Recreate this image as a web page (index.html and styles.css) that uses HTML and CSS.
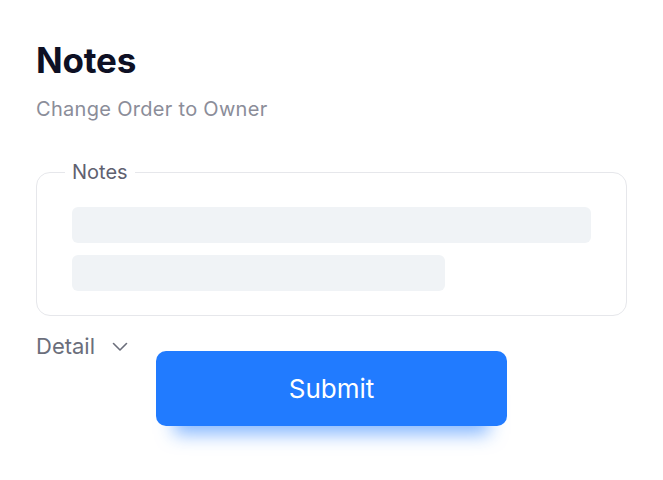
FILE: index.html
```html
<!DOCTYPE html>
<html>
<head>
<meta charset="utf-8">
<link rel="stylesheet" href="styles.css">
</head>
<body>
<div class="page">
  <h1 class="title">Notes</h1>
  <p class="subtitle">Change Order to Owner</p>
  <fieldset class="card">
    <legend class="legend">Notes</legend>
    <div class="bar bar-long"></div>
    <div class="bar bar-short"></div>
  </fieldset>
  <div class="detail">
    <span>Detail</span>
    <svg class="chev" width="16" height="10" viewBox="0 0 16 10"><path d="M1.5 1.5 L8 8 L14.5 1.5" fill="none" stroke="#6b6e7b" stroke-width="1.6" stroke-linecap="round" stroke-linejoin="round"/></svg>
  </div>
  <div class="actions">
    <button class="submit">Submit</button>
  </div>
</div>
</body>
</html>
```
FILE: styles.css
```css
* { box-sizing: border-box; }
html, body { margin: 0; background: #fff; }
body { font-family: Inter, "Noto Sans", sans-serif; }
.page { padding: 38px 36px 0 36px; }
.title {
  margin: 0;
  font-size: 35px;
  line-height: 44px;
  font-weight: 700;
  color: #0e1024;
  letter-spacing: -0.2px;
}
.subtitle {
  margin: 15px 0 0 0;
  font-size: 20px;
  line-height: 24px;
  color: #8b8d99;
  letter-spacing: 0.3px;
}
.card {
  margin: 39px 0 0 0;
  border: 1px solid #e6e7eb;
  border-radius: 14px;
  padding: 23px 35px 24px 35px;
  min-width: 0;
}
.legend {
  padding: 0 7px;
  margin-left: -7px;
  font-size: 20px;
  line-height: 24px;
  color: #5f6170;
}
.bar {
  height: 36px;
  border-radius: 6px;
  background: #f0f3f6;
}
.bar-short { width: 373px; margin-top: 12px; }
.detail {
  margin-top: 16px;
  display: flex;
  align-items: center;
  gap: 17px;
  font-size: 22px;
  line-height: 28px;
  color: #6b6e7b;
}
.chev { margin-top: 2px; }
.actions {
  display: flex;
  justify-content: center;
  margin-top: -9px;
  padding-bottom: 40px;
}
.submit {
  width: 351px;
  height: 75px;
  border: 0;
  border-radius: 10px;
  background: #217bff;
  color: #fff;
  font-family: Inter, "Noto Sans", sans-serif;
  font-size: 26px;
  box-shadow: 0 26px 18px -18px rgba(33, 123, 255, 0.55);
}
```
